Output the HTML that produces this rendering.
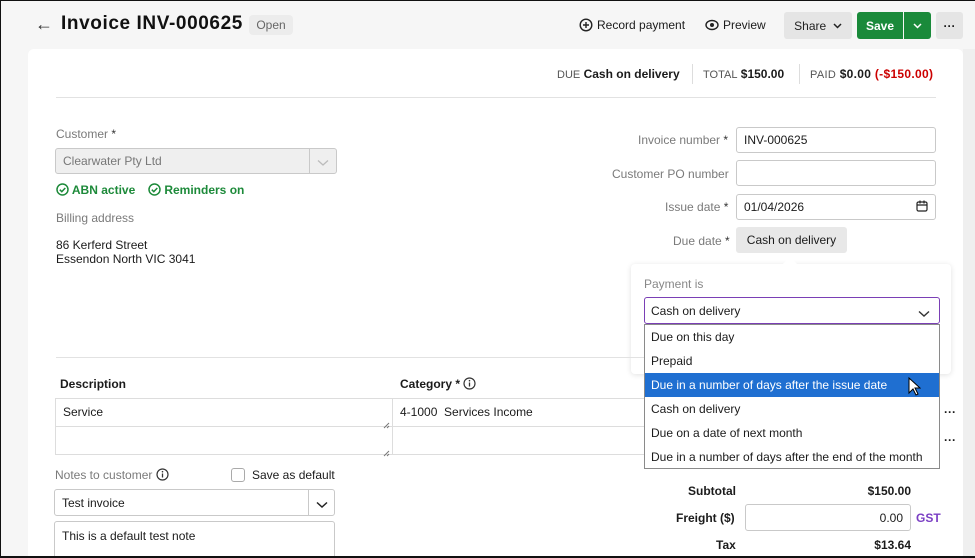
<!DOCTYPE html>
<html><head><meta charset="utf-8"><style>
*{box-sizing:border-box;margin:0;padding:0}
html{width:975px;height:558px;overflow:hidden}
body{width:975px;height:558px;overflow:hidden;background:#f6f6f6;font-family:"Liberation Sans",sans-serif;font-size:12px;color:#1b1b1b;position:relative}
.a{position:absolute}
.frame{position:absolute;left:0;top:0;width:975px;height:558px;border-left:1px solid #111;border-top:1px solid #111;border-bottom:2px solid #111;pointer-events:none;z-index:20}
.card{position:absolute;left:28px;top:49px;width:935px;height:509px;background:#fff;border-radius:6px 6px 0 0}
.lbl{color:#7a7a7a;font-size:12px}
.inp{position:absolute;border:1px solid #c9c9c9;border-radius:3px;background:#fff;font-size:12px;padding-left:7px;display:flex;align-items:center}
.btn{position:absolute;border-radius:3px;display:flex;align-items:center;justify-content:center;font-size:12px}
.g{color:#1d8a3a;font-weight:bold;font-size:12px}
.opt{height:24px;line-height:24px;padding-left:6px;font-size:12px}
b{font-weight:bold}
</style></head><body>
<div class="card"></div>
<div class="a" style="left:963px;top:49px;width:12px;height:509px;background:#efefef"></div>

<div class="a" style="left:35px;top:14px;font-size:18px;color:#333">&#8592;</div>
<div class="a" style="left:61px;top:13px;font-size:19px;font-weight:bold;color:#111;letter-spacing:0.6px">Invoice INV-000625</div>
<div class="a" style="left:249px;top:15px;width:44px;height:20px;background:#ececec;border-radius:4px;color:#666;font-size:12px;text-align:center;line-height:20px">Open</div>
<div class="a" style="left:579px;top:18px;font-size:12px;display:flex;align-items:center"><svg width="14" height="14" style="margin-right:4px"><circle cx="7" cy="7" r="5.8" stroke="#222" fill="none" stroke-width="1.4"/><path d="M7 4v6M4 7h6" stroke="#222" stroke-width="1.4"/></svg>Record payment</div>
<div class="a" style="left:705px;top:18px;font-size:12px;display:flex;align-items:center"><svg width="14" height="14" style="margin-right:4px"><ellipse cx="7" cy="7" rx="6" ry="4.5" stroke="#222" fill="none" stroke-width="1.4"/><circle cx="7" cy="7" r="2" fill="#222"/></svg>Preview</div>
<div class="btn" style="left:784px;top:12px;width:68px;height:27px;background:#e5e5e5;color:#222">Share&nbsp;&nbsp;<svg width="9" height="6"><path d="M1 1l3.5 3.5L8 1" stroke="#222" fill="none" stroke-width="1.5"/></svg></div>
<div class="btn" style="left:857px;top:12px;width:46px;height:27px;background:#1a8a3a;color:#fff;font-weight:bold;border-radius:3px 0 0 3px">Save</div>
<div class="btn" style="left:904px;top:12px;width:27px;height:27px;background:#1a8a3a;border-radius:0 3px 3px 0"><svg width="9" height="6"><path d="M1 1l3.5 3.5L8 1" stroke="#fff" fill="none" stroke-width="1.5"/></svg></div>
<div class="btn" style="left:936px;top:12px;width:27px;height:27px;background:#e5e5e5;font-weight:bold">&middot;&middot;&middot;</div>

<div class="a" style="left:557px;top:67px;font-size:12px"><span style="color:#555;font-size:11px">DUE</span> <b>Cash on delivery</b></div>
<div class="a" style="left:692px;top:64px;width:1px;height:20px;background:#ddd"></div>
<div class="a" style="left:703px;top:67px;font-size:12px"><span style="color:#555;font-size:11px">TOTAL</span> <b>$150.00</b></div>
<div class="a" style="left:799px;top:64px;width:1px;height:20px;background:#ddd"></div>
<div class="a" style="left:810px;top:67px;font-size:12px;letter-spacing:0.3px"><span style="color:#555;font-size:11px">PAID</span> <b>$0.00</b> <b style="color:#c00">(-$150.00)</b></div>
<div class="a" style="left:56px;top:97px;width:880px;height:1px;background:#e2e2e2"></div>

<div class="a lbl" style="left:56px;top:127px">Customer<span style="color:#333"> *</span></div>
<div class="inp" style="left:55px;top:148px;width:282px;height:26px;background:#efefef;color:#777">Clearwater Pty Ltd</div>
<div class="a" style="left:309px;top:148px;width:1px;height:26px;background:#c9c9c9"></div>
<div class="a" style="left:317px;top:156px"><svg width="12" height="8"><path d="M1 1.5l5 4.5 5-4.5" stroke="#bbb" fill="none" stroke-width="1.3"/></svg></div>
<div class="a g" style="left:56px;top:183px"><svg width="13" height="13" style="vertical-align:-2px"><circle cx="6.5" cy="6.5" r="5.5" stroke="#1d8a3a" fill="none" stroke-width="1.5"/><path d="M3.8 6.7l2 2 3.5-3.7" stroke="#1d8a3a" fill="none" stroke-width="1.5"/></svg> ABN active</div>
<div class="a g" style="left:148px;top:183px"><svg width="13" height="13" style="vertical-align:-2px"><circle cx="6.5" cy="6.5" r="5.5" stroke="#1d8a3a" fill="none" stroke-width="1.5"/><path d="M3.8 6.7l2 2 3.5-3.7" stroke="#1d8a3a" fill="none" stroke-width="1.5"/></svg> Reminders on</div>
<div class="a lbl" style="left:56px;top:211px">Billing address</div>
<div class="a" style="left:56px;top:238px;line-height:14px">86 Kerferd Street<br>Essendon North VIC 3041</div>

<div class="a lbl" style="left:638px;top:133px">Invoice number<span style="color:#333"> *</span></div>
<div class="inp" style="left:736px;top:127px;width:200px;height:26px">INV-000625</div>
<div class="a lbl" style="left:612px;top:167px">Customer PO number</div>
<div class="inp" style="left:736px;top:160px;width:200px;height:26px"></div>
<div class="a lbl" style="left:665px;top:200px">Issue date<span style="color:#333"> *</span></div>
<div class="inp" style="left:736px;top:194px;width:200px;height:26px">01/04/2026</div>
<div class="a" style="left:916px;top:200px"><svg width="12" height="12"><rect x="1" y="2" width="10" height="9" rx="1.5" stroke="#222" fill="none" stroke-width="1.2"/><path d="M1 5h10M4 0.5v3M8 0.5v3" stroke="#222" stroke-width="1.2"/></svg></div>
<div class="a lbl" style="left:673px;top:234px">Due date<span style="color:#333"> *</span></div>
<div class="btn" style="left:736px;top:227px;width:111px;height:26px;background:#e8e8e8">Cash on delivery</div>

<div class="a" style="left:631px;top:264px;width:320px;height:110px;background:#fff;border-radius:4px;box-shadow:0 1px 6px rgba(0,0,0,.12)"></div>
<div class="a" style="left:785px;top:259px;width:10px;height:10px;background:#fff;transform:rotate(45deg)"></div>
<div class="a lbl" style="left:644px;top:277px;color:#888">Payment is</div>
<div class="inp" style="left:644px;top:297px;width:296px;height:27px;border-color:#7a3fb5;padding-left:6px">Cash on delivery</div>
<div class="a" style="left:918px;top:307px"><svg width="12" height="8"><path d="M1 1.5l5 4.5 5-4.5" stroke="#333" fill="none" stroke-width="1.4"/></svg></div>
<div class="a" style="left:644px;top:324px;width:296px;height:145px;background:#fff;border:1px solid #8a8a8a;z-index:5">
<div class="opt">Due on this day</div>
<div class="opt">Prepaid</div>
<div class="opt" style="background:#1f6fd1;color:#fff">Due in a number of days after the issue date</div>
<div class="opt">Cash on delivery</div>
<div class="opt">Due on a date of next month</div>
<div class="opt">Due in a number of days after the end of the month</div>
</div>
<div class="a" style="left:908px;top:377px;z-index:6"><svg width="13" height="19"><path d="M1 1v15l4-4 3 6 2-1-3-6h5z" fill="#fff" stroke="#000" stroke-width="1"/></svg></div>

<div class="a" style="left:56px;top:357px;width:590px;height:1px;background:#e2e2e2"></div>
<div class="a" style="left:60px;top:377px;font-weight:bold">Description</div>
<div class="a" style="left:400px;top:377px;font-weight:bold">Category * <svg width="13" height="13" style="vertical-align:-2px"><circle cx="6.5" cy="6.5" r="5.5" stroke="#333" fill="none" stroke-width="1.2"/><path d="M6.5 5.5v4" stroke="#333" stroke-width="1.3"/><circle cx="6.5" cy="3.7" r=".8" fill="#333"/></svg></div>
<div class="a" style="left:55px;top:398px;width:590px;height:57px;border:1px solid #ddd;border-right:none"></div>
<div class="a" style="left:55px;top:426px;width:590px;height:1px;background:#ddd"></div>
<div class="a" style="left:392px;top:398px;width:1px;height:57px;background:#ddd"></div>
<div class="a" style="left:63px;top:405px">Service</div>
<div class="a" style="left:400px;top:405px">4-1000&nbsp; Services Income</div>
<div class="a" style="left:383px;top:418px"><svg width="7" height="7"><path d="M1 6L6 1M4 6L6 4" stroke="#777" stroke-width="1"/></svg></div>
<div class="a" style="left:383px;top:446px"><svg width="7" height="7"><path d="M1 6L6 1M4 6L6 4" stroke="#777" stroke-width="1"/></svg></div>
<div class="a" style="left:944px;top:405px;font-weight:bold">&middot;&middot;&middot;</div>
<div class="a" style="left:944px;top:433px;font-weight:bold">&middot;&middot;&middot;</div>

<div class="a lbl" style="left:55px;top:468px">Notes to customer <svg width="13" height="13" style="vertical-align:-2px"><circle cx="6.5" cy="6.5" r="5.5" stroke="#333" fill="none" stroke-width="1.2"/><path d="M6.5 5.5v4" stroke="#333" stroke-width="1.3"/><circle cx="6.5" cy="3.7" r=".8" fill="#333"/></svg></div>
<div class="a" style="left:231px;top:468px;width:14px;height:14px;border:1px solid #aaa;border-radius:3px"></div>
<div class="a" style="left:252px;top:468px">Save as default</div>
<div class="inp" style="left:54px;top:489px;width:281px;height:27px">Test invoice</div>
<div class="a" style="left:308px;top:489px;width:1px;height:27px;background:#c9c9c9"></div>
<div class="a" style="left:316px;top:498px"><svg width="12" height="8"><path d="M1 1.5l5 4.5 5-4.5" stroke="#222" fill="none" stroke-width="1.5"/></svg></div>
<div class="a" style="left:54px;top:521px;width:281px;height:50px;border:1px solid #c9c9c9;border-radius:3px;padding:7px 7px">This is a default test note</div>

<div class="a" style="left:688px;top:484px;font-weight:bold">Subtotal</div>
<div class="a" style="right:64px;top:484px;font-weight:bold">$150.00</div>
<div class="a" style="left:676px;top:511px;font-weight:bold">Freight ($)</div>
<div class="inp" style="left:745px;top:504px;width:166px;height:27px;justify-content:flex-end;padding-right:7px">0.00</div>
<div class="a" style="left:916px;top:511px;color:#7b3fc4;font-weight:bold">GST</div>
<div class="a" style="left:716px;top:538px;font-weight:bold">Tax</div>
<div class="a" style="right:64px;top:538px;font-weight:bold">$13.64</div>
<div class="frame"></div>
</body></html>
